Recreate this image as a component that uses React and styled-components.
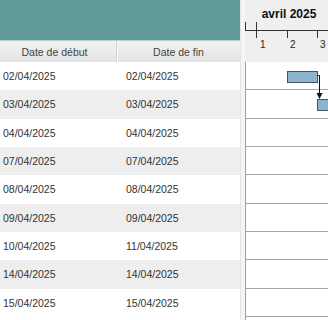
import React from 'react'
import styled, { createGlobalStyle } from 'styled-components'

const ROW = 85 / 3
const DAY = 30
const ORIGIN = 12
const BAR_H = 11

const tasks = [
  { start: '02/04/2025', end: '02/04/2025' },
  { start: '03/04/2025', end: '03/04/2025' },
  { start: '04/04/2025', end: '04/04/2025' },
  { start: '07/04/2025', end: '07/04/2025' },
  { start: '08/04/2025', end: '08/04/2025' },
  { start: '09/04/2025', end: '09/04/2025' },
  { start: '10/04/2025', end: '11/04/2025' },
  { start: '14/04/2025', end: '14/04/2025' },
  { start: '15/04/2025', end: '15/04/2025' }
]

const day = d => parseInt(d.slice(0, 2), 10)
const dayX = n => ORIGIN + (n - 1) * DAY

const GlobalStyle = createGlobalStyle`
  html, body {
    margin: 0;
    padding: 0;
    background: #fff;
    overflow: hidden;
  }
  body {
    font-family: "Liberation Sans", Arial, sans-serif;
  }
`

const Layout = styled.div`
  width: 328px;
  height: 320px;
  display: flex;
  overflow: hidden;
`

const GridPanel = styled.div`
  width: 240px;
  flex-shrink: 0;
  display: flex;
  flex-direction: column;
  overflow: hidden;
`

const Banner = styled.div`
  height: 40px;
  flex-shrink: 0;
  background: #609a99;
`

const HeaderRow = styled.div`
  height: 22px;
  flex-shrink: 0;
  display: grid;
  grid-template-columns: 116px 124px;
  background: linear-gradient(#f3f3f3, #e3e3e3);
  border-top: 1px solid #b8cfce;
  box-sizing: border-box;
`

const HeaderCell = styled.div`
  display: flex;
  align-items: center;
  justify-content: center;
  padding-right: ${props => props.shift || 0}px;
  font-size: 10.5px;
  color: #444;
  border-left: ${props => props.divided ? '1px solid #d2d2d2' : 'none'};
  box-shadow: ${props => props.divided ? 'inset 1px 0 #fafafa' : 'none'};
`

const Row = styled.div`
  height: ${ROW}px;
  flex-shrink: 0;
  display: grid;
  grid-template-columns: 116px 124px;
  align-items: center;
  background: ${props => props.striped ? '#eeeeee' : '#ffffff'};
`

const Cell = styled.div`
  padding-left: ${props => props.indent}px;
  font-size: 10.5px;
  color: #333;
  white-space: nowrap;
`

const Splitter = styled.div`
  width: 5px;
  flex-shrink: 0;
  background: #f5f5f5;
  border-left: 1px solid #e4e4e4;
  box-sizing: border-box;
`

const ChartPanel = styled.div`
  flex: 1;
  display: flex;
  flex-direction: column;
  overflow: hidden;
`

const Scale = styled.div`
  height: 62px;
  flex-shrink: 0;
  background: #efefef;
`

const ChartBody = styled.div`
  flex: 1;
  position: relative;
  display: flex;
  flex-direction: column;
  border-left: 1px solid #a0a0a0;
`

const ChartRow = styled.div`
  height: ${ROW}px;
  flex-shrink: 0;
  box-sizing: border-box;
  border-bottom: 1px solid #a8a8a8;
`

const Overlay = styled.svg`
  position: absolute;
  top: 0;
  left: -1px;
  overflow: visible;
`

function TimeScale() {
  return (
    <svg width="83" height="62">
      <text x="44" y="18" textAnchor="middle" fontSize="12" fontWeight="bold"
        fontFamily="Liberation Sans, Arial, sans-serif" fill="#111">avril 2025</text>
      <line x1="0.5" y1="30.5" x2="83" y2="30.5" stroke="#333" />
      <line x1="0.5" y1="22" x2="0.5" y2="31" stroke="#333" />
      <line x1="11.5" y1="22" x2="11.5" y2="38" stroke="#333" />
      {[2, 3].map(d => (
        <line key={d} x1={dayX(d) + 0.5} y1="30" x2={dayX(d) + 0.5} y2="38" stroke="#333" />
      ))}
      {[1, 2, 3].map(d => (
        <text key={d} x={dayX(d) + 3} y="48" fontSize="10"
          fontFamily="Liberation Sans, Arial, sans-serif" fill="#222">{d}</text>
      ))}
    </svg>
  )
}

function Bars() {
  const bars = tasks.map((t, i) => ({
    x: dayX(day(t.start)),
    w: (day(t.end) - day(t.start) + 1) * DAY,
    y: i * ROW + (ROW - BAR_H) / 2
  }))
  const a = bars[0]
  const b = bars[1]
  const lx = a.x + a.w + 2.5
  const my = a.y + BAR_H / 2 - 1
  return (
    <Overlay width="84" height="260">
      {bars.map((r, i) => (
        <rect key={i} x={r.x + 0.5} y={Math.round(r.y) + 0.5} width={r.w} height={BAR_H}
          fill="#8db4cf" stroke="#3f5666" />
      ))}
      <path d={`M${a.x + a.w + 0.5} ${Math.round(my) + 0.5} H${lx} V${b.y - 5}`}
        fill="none" stroke="#111" />
      <path d={`M${lx - 3} ${b.y - 6} H${lx + 3} L${lx} ${b.y} Z`} fill="#111" />
    </Overlay>
  )
}

export default function App() {
  return (
    <>
      <GlobalStyle />
      <Layout>
        <GridPanel>
          <Banner />
          <HeaderRow>
            <HeaderCell shift={7}>Date de début</HeaderCell>
            <HeaderCell divided>Date de fin</HeaderCell>
          </HeaderRow>
          {tasks.map((t, i) => (
            <Row key={i} striped={i % 2 === 1}>
              <Cell indent={3}>{t.start}</Cell>
              <Cell indent={10}>{t.end}</Cell>
            </Row>
          ))}
        </GridPanel>
        <Splitter />
        <ChartPanel>
          <Scale>
            <TimeScale />
          </Scale>
          <ChartBody>
            {tasks.map((t, i) => <ChartRow key={i} />)}
            <Bars />
          </ChartBody>
        </ChartPanel>
      </Layout>
    </>
  )
}
